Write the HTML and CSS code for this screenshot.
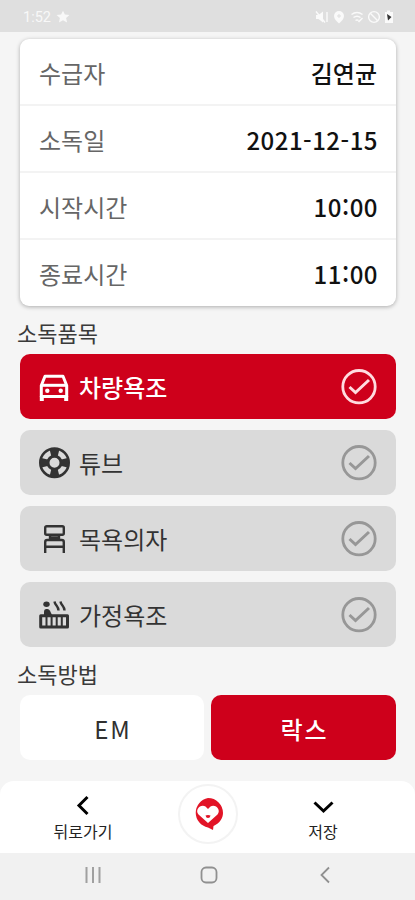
FILE: index.html
```html
<!DOCTYPE html>
<html lang="ko">
<head>
<meta charset="utf-8">
<meta name="viewport" content="width=device-width, initial-scale=1">
<title>소독</title>
<link rel="stylesheet" href="styles.css">
</head>
<body>
<svg width="0" height="0" class="defs">
  <symbol id="check" viewBox="0 0 36 36"><circle cx="18" cy="17.700" r="16.200" fill="none" stroke="currentColor" stroke-width="2.800"/><path d="M8.500 18l6 5.500L28 11" fill="none" stroke="currentColor" stroke-width="3"/></symbol>
</svg>
<div class="screen">
  <header class="status">
    <div class="status-left"><span>1:52</span>
      <svg width="14" height="14" viewBox="0 0 14 14"><path d="M7 .7l1.900 3.800 4.500.4-3.300 3 1 4.600L7 10.200l-4.100 2.300 1-4.600-3.300-3 4.500-.4z" fill="#f8f8f8"/></svg>
    </div>
    <svg class="status-icons" width="82" height="16" viewBox="0 0 82 16" fill="none" stroke="#fafafa" stroke-width="1.400">
      <path d="M3 6h2.500L10 2.500v11L5.500 10H3z" fill="#fafafa" stroke="none"/><path d="M3 2.500l9 11M14 3v10"/>
      <path d="M26 2a5 5 0 0 1 5 5c0 3.500-5 7.500-5 7.500s-5-4-5-7.500a5 5 0 0 1 5-5z" fill="#fafafa" stroke="none"/><path d="M24 7h4M26 5v4" stroke="#dfdfdf" stroke-width="1"/>
      <path d="M38.500 5.500q5.500-4 11 0M40.500 8.500q3.500-2.700 7 0M42.500 11.500q1.500-1.200 3 0M45.500 13l4-4" stroke-width="1.500"/>
      <circle cx="61" cy="8" r="5.400"/><path d="M57.300 4.300l7.400 7.400"/>
      <path d="M72 3h2V1.500h3V3h3v11h-8z" fill="#fafafa" stroke="none"/><path d="M74 5l4.500 3-3.500 3.500z" fill="#333" stroke="none"/>
    </svg>
  </header>

  <main class="content">
    <dl class="card">
      <div class="row"><dt>수급자</dt><dd>김연균</dd></div>
      <div class="row"><dt>소독일</dt><dd class="num">2021-12-15</dd></div>
      <div class="row"><dt>시작시간</dt><dd class="num">10:00</dd></div>
      <div class="row"><dt>종료시간</dt><dd class="num">11:00</dd></div>
    </dl>

    <h2 class="title">소독품목</h2>
    <div class="items">
      <div class="item active">
        <svg class="icon" width="32" height="32" viewBox="0 0 32 32" fill="none" stroke="currentColor" stroke-width="3" stroke-linejoin="round"><path d="M3.300 14.500L7 5.300h18L28.700 14.500v11H3.300z"/><path d="M4 14.300h24" stroke-width="3"/><path d="M3.800 25v5M28.200 25v5" stroke-width="4"/><circle cx="9.300" cy="19.800" r="2.200" fill="currentColor" stroke="none"/><circle cx="22.700" cy="19.800" r="2.200" fill="currentColor" stroke="none"/></svg>
        <span class="name">차량욕조</span><svg class="check" width="36" height="36"><use href="#check"/></svg>
      </div>
      <div class="item">
        <svg class="icon" width="32" height="32" viewBox="0 0 32 32" fill="none" stroke="currentColor"><circle cx="16.500" cy="15.700" r="14.200" stroke-width="2.600"/><circle cx="16.500" cy="15.700" r="6.500" stroke-width="3"/><path d="M11.500 2h10l-2 8h-6zM11.500 29.500h10l-2-8h-6zM2.500 10.700v10l8-2v-6zM30.500 10.700v10l-8-2v-6z" fill="currentColor" stroke="none"/></svg>
        <span class="name">튜브</span><svg class="check" width="36" height="36"><use href="#check"/></svg>
      </div>
      <div class="item">
        <svg class="icon" width="32" height="32" viewBox="0 0 32 32" fill="none" stroke="currentColor" stroke-width="2.400" stroke-linejoin="round"><rect x="7.200" y="3.200" width="18.600" height="8.600" rx="1.500"/><path d="M12 12v4.500M21 12v4.500M12 14.500h9M7.200 30V19q0-2 2-2h14.600q2 0 2 2v11M7.200 23.800h18.600"/></svg>
        <span class="name">목욕의자</span><svg class="check" width="36" height="36"><use href="#check"/></svg>
      </div>
      <div class="item">
        <svg class="icon" width="32" height="32" viewBox="0 0 32 32" fill="none" stroke="currentColor"><ellipse cx="8.500" cy="5.300" rx="3.200" ry="2.700" fill="currentColor" stroke="none"/><path d="M6 17v-4.500q0-2.500 2-2.500h1.500q1.500 0 2.500 1.800L14 16v1z" fill="currentColor" stroke="none"/><path d="M16.500 2.500c.5 4 4 4.500 4 9M22.500 2.500c.5 4 4 4.500 4 9" stroke-width="2.400"/><path d="M2.700 16.700h26.800v11.300H2.700z" stroke-width="3" stroke-linejoin="round"/><path d="M8.500 16v12M13.600 16v12M18.700 16v12M23.800 16v12" stroke-width="2"/></svg>
        <span class="name">가정욕조</span><svg class="check" width="36" height="36"><use href="#check"/></svg>
      </div>
    </div>

    <h2 class="title">소독방법</h2>
    <div class="buttons"><button class="btn">EM</button><button class="btn active">락스</button></div>
  </main>

  <nav class="tabs">
    <div class="tab back"><svg width="24" height="24" viewBox="0 0 24 24" fill="none" stroke="#000" stroke-width="3"><path d="M16.500 4L8 12.500l8.500 8.500"/></svg><span>뒤로가기</span></div>
    <div class="home"><svg width="32" height="34" viewBox="0 0 32 34"><path d="M16 1a15 15 0 0 1 15 15c0 5-3 10-9.500 13l-.5 4-5-2.500A15 15 0 0 1 16 1z" fill="#e21427"/><path d="M16 26L6.500 17.500C2.500 13 8.500 6.500 13.500 9.500L16 12l2.500-2.500c5-3 11 3.500 7 8z" fill="#fff"/><path d="M13.500 18.500q2.500-1 5 0-.5 2.500-2.500 2.500t-2.500-2.500z" fill="#e21427"/></svg></div>
    <div class="tab save"><svg width="24" height="24" viewBox="0 0 24 24" fill="none" stroke="#000" stroke-width="3"><path d="M3.500 9.500l9 8.500 9-8.500"/></svg><span>저장</span></div>
  </nav>
  <footer class="system">
    <svg width="18" height="18" viewBox="0 0 18 18" stroke="#a0a0a0" stroke-width="2"><path d="M2.500 1v16M9 1v16M15.500 1v16"/></svg>
    <svg width="18" height="18" viewBox="0 0 18 18" fill="none" stroke="#909090" stroke-width="1.800"><rect x="1.500" y="1.500" width="15" height="15" rx="4.500"/></svg>
    <svg width="18" height="18" viewBox="0 0 18 18" fill="none" stroke="#909090" stroke-width="1.800"><path d="M13 1.500L5.500 9l7.500 7.500"/></svg>
  </footer>
</div>
</body>
</html>
```
FILE: styles.css
```css
* { box-sizing: border-box; }
body { margin: 0; background: #f5f5f5; font-family: "Noto Sans CJK KR", sans-serif; }
.defs { display: block; }
.screen { width: 415px; height: 900px; margin: 0 auto; display: flex; flex-direction: column; overflow: hidden; }
.status { height: 32px; flex: none; background: #dfdfdf; display: flex; justify-content: space-between; align-items: center; padding: 2px 20px 0 23px; color: #f8f8f8; font: 14.5px Roboto, sans-serif; }
.status-left { display: flex; align-items: center; gap: 5px; }
.content { flex: none; height: 749px; padding: 7px 19px 0 20px; }
.card { margin: 0; height: 267px; background: #fff; border-radius: 9px; box-shadow: 0 1px 4px rgba(0,0,0,.3); display: grid; grid-template-rows: 65px 67px 67px 68px; }
.row { display: flex; justify-content: space-between; align-items: center; padding: 2px 19px 0 19px; font-size: 24px; line-height: 30px; }
.row + .row { border-top: 2px solid #f3f3f3; padding-top: 3px; }
.row:last-child { padding-top: 1px; }
dt { color: #666; }
dd { margin: 0; color: #111; font-weight: 500; }
.num { letter-spacing: .5px; margin-right: -1px; }
.title { margin: 11px 0 7px -3px; font-size: 22px; line-height: 30px; font-weight: 400; color: #3a3a3a; }
.items { display: grid; grid-template-rows: repeat(4, 65px); gap: 11px; margin-bottom: 11px; }
.item { display: flex; align-items: center; padding: 0 19px 0 18px; border-radius: 10px; background: #dadada; color: #333; font-size: 24px; line-height: 30px; }
.item.active, .btn.active { background: #ce001b; color: #fff; font-weight: 500; }
.icon { margin-right: 9px; }
.name { flex: 1; padding-top: 1px; }
.check { color: #979797; }
.active .check { color: #ffdce0; }
.buttons { display: grid; grid-template-columns: 184px 185px; gap: 7px; }
.btn { height: 65px; border: 0; border-radius: 10px; padding: 1px 0 0 2px; background: #fff; color: #303030; font-family: inherit; font-size: 24px; letter-spacing: 2px; }
.tabs { height: 72px; flex: none; background: #fff; border-radius: 14px 14px 0 0; display: flex; align-items: center; }
.tab { width: 80px; display: flex; flex-direction: column; align-items: center; gap: 3px; font-size: 16px; line-height: 22px; color: #222; }
.back { margin-left: 43px; }
.save { margin-left: 45px; }
.home { width: 60px; height: 60px; margin: 0 0 6px 55px; border: 2px solid #f3f3f3; border-radius: 50%; background: #fff; display: flex; align-items: center; justify-content: center; }
.system { flex: 1; background: #f1f1f1; display: flex; justify-content: center; gap: 98px; padding: 13px 0 0 2px; }
```
